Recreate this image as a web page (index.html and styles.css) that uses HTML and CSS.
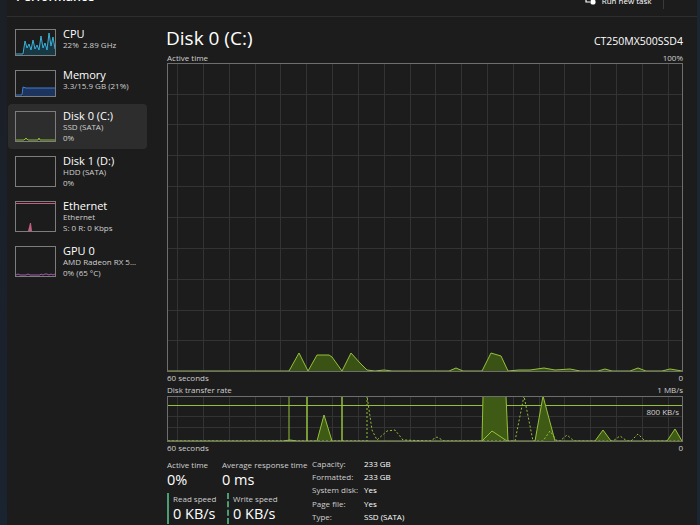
FILE: index.html
```html
<!DOCTYPE html>
<html lang="en">
<head>
    <meta charset="UTF-8">
    <title>Task Manager - Performance</title>
    <link rel="stylesheet" href="styles.css">
</head>
<body>
    <div class="app">
        <div class="rail"></div>
        <div class="window">
            <div class="topbar">
                <div class="page-title">Performance</div>
                <div class="actions">
                    <div class="run-task">
                        <svg width="11" height="10" viewBox="0 0 11 10">
                            <path d="M1 0 V6 H5" fill="none" stroke="#fff" stroke-width="1.2"/>
                            <circle cx="8" cy="6" r="2.6" fill="#fff"/>
                        </svg>
                        <span>Run new task</span>
                    </div>
                    <div class="divider"></div>
                    <div class="more">···</div>
                </div>
            </div>

            <div class="layout">
                <!-- left list of devices -->
                <div class="sidebar">
                    <div class="item">
                        <svg class="thumb" width="41" height="27" viewBox="0 0 41 27">
                            <polygon points="9,26 10,12 12,19 14,15 16,21 18,11 20,20 22,16 24,21 26,7 28,19 30,14 32,21 34,4 36,17 38,8 40,20 40,26" fill="#173845"/>
                            <polyline points="1,25 8,25 10,12 12,19 14,15 16,21 18,11 20,20 22,16 24,21 26,7 28,19 30,14 32,21 34,4 36,17 38,8 40,20" fill="none" stroke="#3cb0d6" stroke-width="1"/>
                            <rect x="0.5" y="0.5" width="40" height="26" fill="none" stroke="#7d7d7d"/>
                        </svg>
                        <div class="info">
                            <div class="name">CPU</div>
                            <div class="sub">22%&nbsp; 2.89 GHz</div>
                        </div>
                    </div>
                    <div class="item">
                        <svg class="thumb" width="41" height="27" viewBox="0 0 41 27">
                            <polygon points="8,26 8,17 11,18 40,18 40,26" fill="#1d355e"/>
                            <polyline points="1,25 7,25 8,17 11,18 40,18" fill="none" stroke="#3e7fd6" stroke-width="1"/>
                            <rect x="0.5" y="0.5" width="40" height="26" fill="none" stroke="#7d7d7d"/>
                        </svg>
                        <div class="info">
                            <div class="name">Memory</div>
                            <div class="sub">3.3/15.9 GB (21%)</div>
                        </div>
                    </div>
                    <div class="item tall selected">
                        <svg class="thumb" width="41" height="31" viewBox="0 0 41 31">
                            <polyline points="1,29 9,29 11,27 13,29 23,29 24,27 25,29 40,29" fill="#3b5412" stroke="#8fbb35" stroke-width="1"/>
                            <rect x="0.5" y="0.5" width="40" height="30" fill="none" stroke="#7d7d7d"/>
                        </svg>
                        <div class="info">
                            <div class="name">Disk 0 (C:)</div>
                            <div class="sub">SSD (SATA)</div>
                            <div class="sub">0%</div>
                        </div>
                    </div>
                    <div class="item tall">
                        <svg class="thumb" width="41" height="31" viewBox="0 0 41 31">
                            <rect x="0.5" y="0.5" width="40" height="30" fill="none" stroke="#7d7d7d"/>
                        </svg>
                        <div class="info">
                            <div class="name">Disk 1 (D:)</div>
                            <div class="sub">HDD (SATA)</div>
                            <div class="sub">0%</div>
                        </div>
                    </div>
                    <div class="item tall">
                        <svg class="thumb" width="41" height="31" viewBox="0 0 41 31">
                            <line x1="1" y1="2.5" x2="40" y2="2.5" stroke="#c0607e" stroke-width="1.2"/>
                            <polygon points="13,30 15,22 16,22 17,30" fill="#c0607e"/>
                            <rect x="0.5" y="0.5" width="40" height="30" fill="none" stroke="#7d7d7d"/>
                        </svg>
                        <div class="info">
                            <div class="name">Ethernet</div>
                            <div class="sub">Ethernet</div>
                            <div class="sub">S: 0 R: 0 Kbps</div>
                        </div>
                    </div>
                    <div class="item tall">
                        <svg class="thumb" width="41" height="31" viewBox="0 0 41 31">
                            <polyline points="1,29 3,28 5,29 11,29 13,28 15,29 25,29 26,28 28,29 30,28 32,28 34,29 36,28 38,29 40,28" fill="none" stroke="#a85bb5" stroke-width="1"/>
                            <rect x="0.5" y="0.5" width="40" height="30" fill="none" stroke="#7d7d7d"/>
                        </svg>
                        <div class="info">
                            <div class="name">GPU 0</div>
                            <div class="sub">AMD Radeon RX 5...</div>
                            <div class="sub">0% (65 °C)</div>
                        </div>
                    </div>
                </div>

                <!-- disk details -->
                <div class="detail">
                    <div class="title-row">
                        <div class="title">Disk 0 (C:)</div>
                        <div class="model">CT250MX500SSD4</div>
                    </div>
                    <div class="axis-row">
                        <span>Active time</span>
                        <span>100%</span>
                    </div>
                    <svg class="chart" width="516" height="309" viewBox="0 0 516 309">
                        <g stroke="#333" stroke-width="1">
                            <line x1="10.5" y1="0" x2="10.5" y2="309"/>
                            <line x1="36.5" y1="0" x2="36.5" y2="309"/>
                            <line x1="62.5" y1="0" x2="62.5" y2="309"/>
                            <line x1="88.5" y1="0" x2="88.5" y2="309"/>
                            <line x1="113.5" y1="0" x2="113.5" y2="309"/>
                            <line x1="139.5" y1="0" x2="139.5" y2="309"/>
                            <line x1="165.5" y1="0" x2="165.5" y2="309"/>
                            <line x1="191.5" y1="0" x2="191.5" y2="309"/>
                            <line x1="217.5" y1="0" x2="217.5" y2="309"/>
                            <line x1="243.5" y1="0" x2="243.5" y2="309"/>
                            <line x1="268.5" y1="0" x2="268.5" y2="309"/>
                            <line x1="294.5" y1="0" x2="294.5" y2="309"/>
                            <line x1="320.5" y1="0" x2="320.5" y2="309"/>
                            <line x1="346.5" y1="0" x2="346.5" y2="309"/>
                            <line x1="372.5" y1="0" x2="372.5" y2="309"/>
                            <line x1="397.5" y1="0" x2="397.5" y2="309"/>
                            <line x1="423.5" y1="0" x2="423.5" y2="309"/>
                            <line x1="449.5" y1="0" x2="449.5" y2="309"/>
                            <line x1="475.5" y1="0" x2="475.5" y2="309"/>
                            <line x1="501.5" y1="0" x2="501.5" y2="309"/>
                            <line x1="0" y1="31.5" x2="516" y2="31.5"/>
                            <line x1="0" y1="61.5" x2="516" y2="61.5"/>
                            <line x1="0" y1="92.5" x2="516" y2="92.5"/>
                            <line x1="0" y1="123.5" x2="516" y2="123.5"/>
                            <line x1="0" y1="154.5" x2="516" y2="154.5"/>
                            <line x1="0" y1="185.5" x2="516" y2="185.5"/>
                            <line x1="0" y1="216.5" x2="516" y2="216.5"/>
                            <line x1="0" y1="247.5" x2="516" y2="247.5"/>
                            <line x1="0" y1="277.5" x2="516" y2="277.5"/>
                        </g>
                        <polyline points="1,308 113,308 122,308 132,290 141,308 150,292 162,292 165,294 175,308 184,290 193,300 200,307 208,308 217,307 225,308 282,308 289,305 296,308 315,308 324,290 334,293 341,308 352,307 363,307 377,305 388,307 403,306 413,308 431,308 438,306 445,308 463,308 471,305 479,308 495,308 503,306 515,308" fill="#3a5314" stroke="#93c13a" stroke-width="1"/>
                        <rect x="0.5" y="0.5" width="515" height="308" fill="none" stroke="#6e6e6e"/>
                    </svg>
                    <div class="axis-row">
                        <span>60 seconds</span>
                        <span>0</span>
                    </div>
                    <div class="axis-row">
                        <span>Disk transfer rate</span>
                        <span>1 MB/s</span>
                    </div>
                    <div class="chart-wrap">
                        <svg class="chart" width="516" height="46" viewBox="0 0 516 46">
                            <g stroke="#333" stroke-width="1">
                                <line x1="10.5" y1="0" x2="10.5" y2="46"/>
                                <line x1="36.5" y1="0" x2="36.5" y2="46"/>
                                <line x1="62.5" y1="0" x2="62.5" y2="46"/>
                                <line x1="88.5" y1="0" x2="88.5" y2="46"/>
                                <line x1="113.5" y1="0" x2="113.5" y2="46"/>
                                <line x1="139.5" y1="0" x2="139.5" y2="46"/>
                                <line x1="165.5" y1="0" x2="165.5" y2="46"/>
                                <line x1="191.5" y1="0" x2="191.5" y2="46"/>
                                <line x1="217.5" y1="0" x2="217.5" y2="46"/>
                                <line x1="243.5" y1="0" x2="243.5" y2="46"/>
                                <line x1="268.5" y1="0" x2="268.5" y2="46"/>
                                <line x1="294.5" y1="0" x2="294.5" y2="46"/>
                                <line x1="320.5" y1="0" x2="320.5" y2="46"/>
                                <line x1="346.5" y1="0" x2="346.5" y2="46"/>
                                <line x1="372.5" y1="0" x2="372.5" y2="46"/>
                                <line x1="397.5" y1="0" x2="397.5" y2="46"/>
                                <line x1="423.5" y1="0" x2="423.5" y2="46"/>
                                <line x1="449.5" y1="0" x2="449.5" y2="46"/>
                                <line x1="475.5" y1="0" x2="475.5" y2="46"/>
                                <line x1="501.5" y1="0" x2="501.5" y2="46"/>
                                <line x1="0" y1="20.5" x2="516" y2="20.5"/>
                                <line x1="0" y1="31.5" x2="516" y2="31.5"/>
                            </g>
                            <line x1="0" y1="9.5" x2="516" y2="9.5" stroke="#93c13a" stroke-width="1"/>
                            <!-- read (solid) -->
                            <polyline points="1,45 116,45 123,44 130,45 140,45 140,0 140,45 150,45 157,19 165,45 175,45 175,0 175,45 315,45 316,0 339,0 341,45 368,45 376,0 388,45 428,45 436,34 444,45 500,45 508,33 515,45" fill="#3f5a14" stroke="#93c13a" stroke-width="1"/>
                            <polyline points="315,45 325,35 340,45" fill="none" stroke="#93c13a" stroke-width="1"/>
                            <!-- write (dashed) -->
                            <polyline points="1,45 122,45 122,0 122,45 200,45 200,0 205,34 210,44 220,35 228,34 236,44 263,45 270,41 277,45 348,45 357,0 366,45 376,45 383,35 390,45 393,45 400,39 407,45 446,45 453,40 460,45 464,45 471,38 478,45 515,45" fill="none" stroke="#93c13a" stroke-width="1" stroke-dasharray="2 2"/>
                            <rect x="0.5" y="0.5" width="515" height="45" fill="none" stroke="#6e6e6e"/>
                        </svg>
                        <span class="threshold">800 KB/s</span>
                    </div>
                    <div class="axis-row">
                        <span>60 seconds</span>
                        <span>0</span>
                    </div>

                    <div class="stats">
                        <div class="stats-left">
                            <div class="metrics">
                                <div class="metric first">
                                    <div class="label">Active time</div>
                                    <div class="value">0%</div>
                                </div>
                                <div class="metric">
                                    <div class="label">Average response time</div>
                                    <div class="value">0 ms</div>
                                </div>
                            </div>
                            <div class="speeds">
                                <div class="speed read">
                                    <div class="label">Read speed</div>
                                    <div class="value">0 KB/s</div>
                                </div>
                                <div class="speed write">
                                    <div class="label">Write speed</div>
                                    <div class="value">0 KB/s</div>
                                </div>
                            </div>
                        </div>
                        <div class="props">
                            <span class="key">Capacity:</span><span class="val">233 GB</span>
                            <span class="key">Formatted:</span><span class="val">233 GB</span>
                            <span class="key">System disk:</span><span class="val">Yes</span>
                            <span class="key">Page file:</span><span class="val">Yes</span>
                            <span class="key">Type:</span><span class="val">SSD (SATA)</span>
                        </div>
                    </div>
                </div>
            </div>
        </div>
        <div class="edge"></div>
    </div>
</body>
</html>
```

FILE: styles.css
```css
body {
    margin: 0;
    background-color: #1c1c1c;
    font-family: "Open Sans", "Noto Sans", sans-serif;
    color: #ffffff;
}
.app {
    display: flex;
    width: 700px;
    height: 525px;
    overflow: hidden;
}
.rail {
    width: 7px;
    background: linear-gradient(#1b1f26, #1a2330);
}
.edge {
    width: 3px;
    background-color: #1c2532;
}
.window {
    flex: 1;
    display: flex;
    flex-direction: column;
    background-color: #1c1c1c;
}
.topbar {
    height: 16px;
    border-bottom: 1px solid #2e2e2e;
    display: flex;
    justify-content: space-between;
    align-items: flex-start;
    overflow: hidden;
}
.page-title {
    margin: -11px 0 0 9px;
    font-size: 12.5px;
    font-weight: 600;
    line-height: 16px;
}
.actions {
    display: flex;
    align-items: flex-start;
    margin-right: 10px;
}
.run-task {
    display: flex;
    align-items: flex-start;
    gap: 6px;
    margin-top: -5px;
    font-size: 8px;
    line-height: 11px;
}
.run-task svg {
    margin-top: 1px;
}
.divider {
    width: 1px;
    height: 9px;
    background-color: #3a3a3a;
    margin: 0 11px;
}
.more {
    margin-top: -8px;
    font-size: 12px;
    line-height: 12px;
    letter-spacing: 1px;
}
.layout {
    flex: 1;
    display: flex;
}
.sidebar {
    width: 153px;
    padding-top: 5px;
}
.item {
    display: flex;
    gap: 7px;
    width: 139px;
    margin-left: 1px;
    padding: 7px;
    box-sizing: border-box;
}
.item.tall {
    height: 45px;
}
.item.selected {
    background-color: #2d2d2d;
    border-radius: 4px;
}
.thumb {
    flex-shrink: 0;
    display: block;
}
.info {
    margin-top: -2px;
}
.name {
    font-size: 11px;
    line-height: 13px;
}
.sub {
    font-size: 8px;
    line-height: 10.5px;
    color: #cfcfcf;
    white-space: nowrap;
}
.detail {
    flex: 1;
    padding: 0 14px 0 7px;
}
.title-row {
    display: flex;
    justify-content: space-between;
    align-items: baseline;
    margin-top: 9px;
}
.title {
    font-size: 19px;
    line-height: 24px;
    margin-left: -1px;
}
.model {
    font-size: 10.5px;
}
.axis-row {
    display: flex;
    justify-content: space-between;
    font-size: 8px;
    line-height: 12px;
    color: #d0d0d0;
}
.title-row + .axis-row {
    margin-top: 2px;
    line-height: 11px;
}
.chart {
    display: block;
}
.chart-wrap {
    position: relative;
}
.threshold {
    position: absolute;
    right: 4px;
    top: 10px;
    font-size: 8px;
    line-height: 11px;
    color: #d0d0d0;
}
.stats {
    display: flex;
    margin-top: 5px;
}
.stats-left {
    width: 145px;
}
.metrics {
    display: flex;
}
.metric.first {
    width: 55px;
}
.label {
    font-size: 8px;
    line-height: 11px;
    color: #cfcfcf;
    white-space: nowrap;
}
.value {
    font-size: 14.5px;
    line-height: 20px;
}
.speeds {
    display: flex;
    margin-top: 3px;
}
.speed {
    width: 54px;
    padding-left: 4px;
    border-left: 2px solid #4c9e72;
}
.speed.write {
    border-left: 2px dashed #4c9e72;
}
.props {
    display: grid;
    grid-template-columns: 52px auto;
    font-size: 8px;
    line-height: 12.3px;
    margin-top: -1px;
}
.key {
    color: #cfcfcf;
}
.val {
    color: #ffffff;
}
```
